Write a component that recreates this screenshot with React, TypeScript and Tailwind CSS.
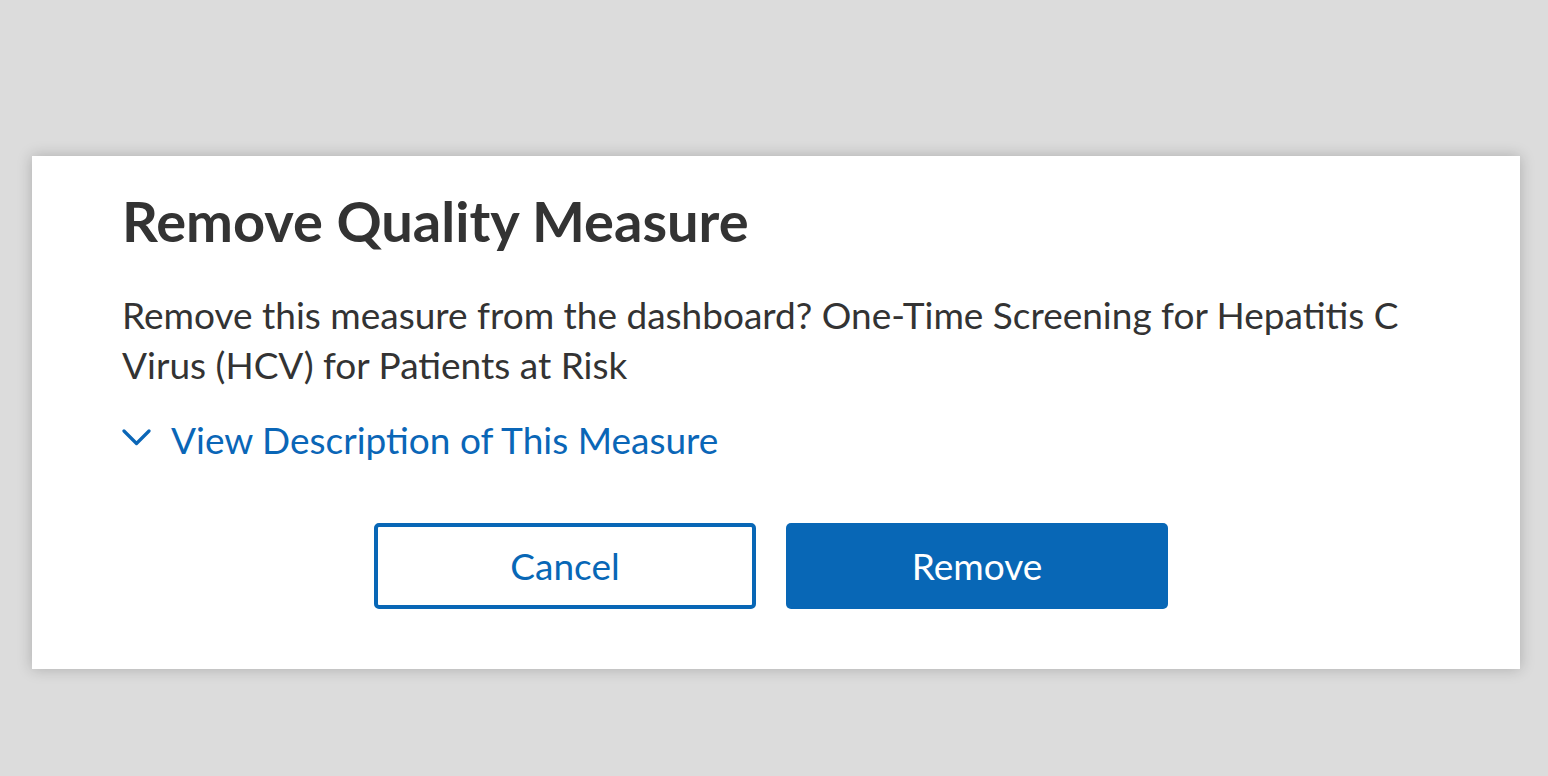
export default function App() {
  return (
    <div
      className="min-h-screen w-full bg-[#dcdcdc] pt-[156px] pl-[32px] pr-[28px]"
      style={{ fontFamily: "Lato, 'Noto Sans', sans-serif" }}
    >
      <div className="bg-white shadow-[0_0_14px_rgba(0,0,0,0.22)] px-[90px] pt-[33px] pb-[60px]">
        <h2 className="text-[56px] leading-[64px] font-bold text-[#333333]">
          Remove Quality Measure
        </h2>

        <p className="mt-[37px] text-[37px] leading-[50px] text-[#333333]">
          Remove this measure from the dashboard? One-Time Screening for Hepatitis C Virus (HCV) for Patients at Risk
        </p>

        <button className="mt-[25px] flex items-center gap-[20px] text-[#0a66b7] text-[37px] leading-[50px]">
          <svg width="29" height="17" viewBox="0 0 29 17" fill="none" className="shrink-0 mb-[6px]">
            <polyline points="2,2 14.5,14.5 27,2" stroke="#0a66b7" strokeWidth="3.2" strokeLinecap="round" strokeLinejoin="round" />
          </svg>
          <span>View Description of This Measure</span>
        </button>

        <div className="mt-[58px] flex justify-center gap-[30px] pr-[10px]">
          <button className="w-[382px] h-[86px] rounded-[5px] border-[4px] border-[#0867b6] bg-white text-[#0867b6] text-[37px]">
            Cancel
          </button>
          <button className="w-[382px] h-[86px] rounded-[5px] bg-[#0867b6] text-white text-[37px]">
            Remove
          </button>
        </div>
      </div>
    </div>
  );
}
